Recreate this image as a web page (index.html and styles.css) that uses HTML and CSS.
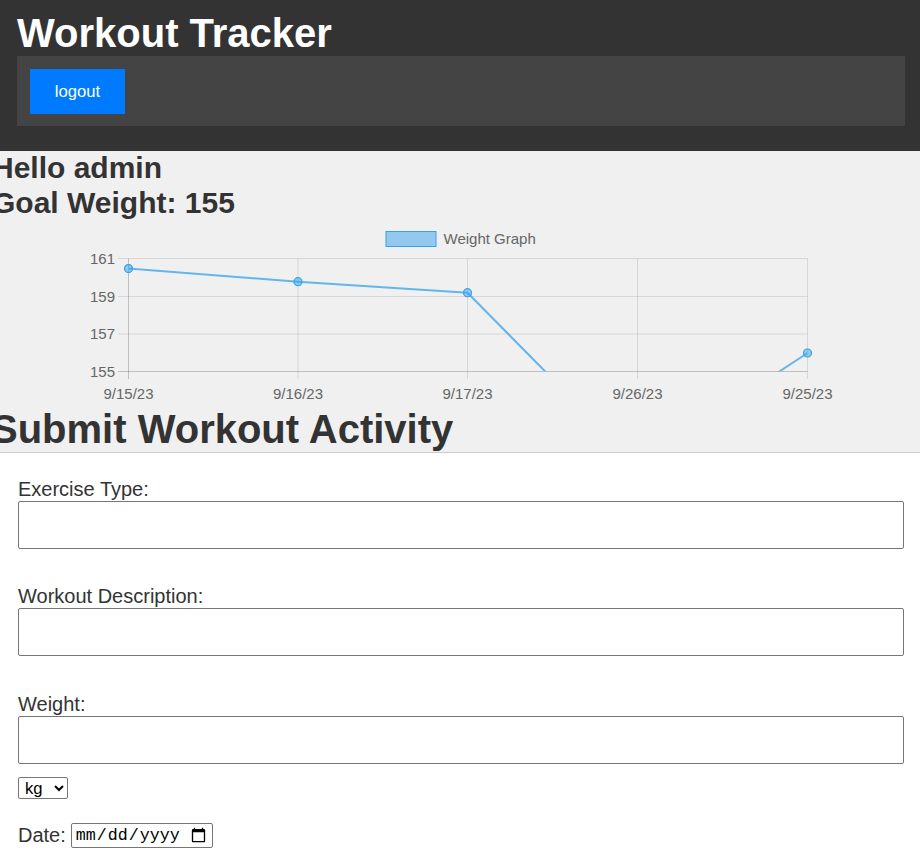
FILE: index.html
```html
<!DOCTYPE html>
<html lang="en">
<head>
<meta charset="utf-8">
<title>Workout Tracker</title>
<link rel="stylesheet" href="styles.css">
</head>
<body>
<header class="site-header">
  <h1 class="site-title">Workout Tracker</h1>
  <nav class="site-nav">
    <button class="logout-btn" type="button">logout</button>
  </nav>
</header>
<main class="main">
  <section class="summary">
    <h2 class="greeting">Hello admin</h2>
    <h2 class="goal">Goal Weight: 155</h2>
    <svg class="chart" width="920" height="186" viewBox="0 220 920 186" xmlns="http://www.w3.org/2000/svg">
      <defs>
        <clipPath id="area">
          <rect x="128.3" y="258.7" width="679" height="112.6"/>
        </clipPath>
      </defs>
      <rect x="386" y="231.5" width="50" height="15" fill="rgba(54,162,235,0.5)" stroke="rgb(54,162,235)" stroke-width="1"/>
      <text x="443.5" y="243.5" class="legend-text">Weight Graph</text>
      <g stroke="rgba(0,0,0,0.1)" stroke-width="1" fill="none">
        <line x1="118" y1="258.5" x2="807.5" y2="258.5"/>
        <line x1="118" y1="296.5" x2="807.5" y2="296.5"/>
        <line x1="118" y1="334" x2="807.5" y2="334"/>
        <line x1="298" y1="258.5" x2="298" y2="379"/>
        <line x1="467.5" y1="258.5" x2="467.5" y2="379"/>
        <line x1="637.5" y1="258.5" x2="637.5" y2="379"/>
        <line x1="807.5" y1="258.5" x2="807.5" y2="379"/>
      </g>
      <g stroke="rgba(0,0,0,0.2)" stroke-width="1" fill="none">
        <line x1="118" y1="371.5" x2="807.5" y2="371.5"/>
        <line x1="128.5" y1="258.5" x2="128.5" y2="379"/>
      </g>
      <g class="tick-text" text-anchor="end">
        <text x="115" y="263.5">161</text>
        <text x="115" y="301.5">159</text>
        <text x="115" y="339">157</text>
        <text x="115" y="376.5">155</text>
      </g>
      <g class="tick-text" text-anchor="middle">
        <text x="128.5" y="398.5">9/15/23</text>
        <text x="298" y="398.5">9/16/23</text>
        <text x="467.5" y="398.5">9/17/23</text>
        <text x="637.5" y="398.5">9/26/23</text>
        <text x="807.5" y="398.5">9/25/23</text>
      </g>
      <g clip-path="url(#area)">
        <polyline points="128.5,268.6 298,281.7 467.5,292.7 637.5,465 807.5,353" fill="none" stroke="rgba(54,162,235,0.75)" stroke-width="2" stroke-linejoin="round"/>
      </g>
      <g fill="rgba(54,162,235,0.5)" stroke="rgb(54,162,235)" stroke-width="1.2">
        <circle cx="128.5" cy="268.6" r="4"/>
        <circle cx="298" cy="281.7" r="4"/>
        <circle cx="467.5" cy="292.7" r="4"/>
        <circle cx="807.5" cy="353" r="4"/>
      </g>
    </svg>
    <h2 class="section-title">Submit Workout Activity</h2>
  </section>
  <form class="workout-form" onsubmit="return false;">
    <div class="field field-first">
      <label class="field-label" for="type">Exercise Type:</label>
      <input class="field-input" id="type" type="text">
    </div>
    <div class="field field-second">
      <label class="field-label" for="desc">Workout Description:</label>
      <input class="field-input" id="desc" type="text">
    </div>
    <div class="field field-weight">
      <label class="field-label" for="weight">Weight:</label>
      <input class="field-input" id="weight" type="text">
      <select class="unit-select">
        <option>kg</option>
        <option>lb</option>
      </select>
    </div>
    <div class="date-row">
      <label class="date-label" for="date">Date:</label>
      <input class="date-input" id="date" type="date">
    </div>
  </form>
</main>
</body>
</html>
```

FILE: styles.css
```css
html, body {
  margin: 0;
  padding: 0;
}
body {
  font-family: "Liberation Sans", Arial, sans-serif;
  background: #ffffff;
  color: #333333;
  overflow: hidden;
}
.site-header {
  background: #333333;
  padding: 10px 15px 25px 17px;
}
.site-title {
  margin: 0;
  font-size: 40px;
  font-weight: bold;
  line-height: 46px;
  color: #ffffff;
}
.site-nav {
  background: #444444;
  padding: 13px 13px 12px 13px;
  display: flex;
}
.logout-btn {
  width: 95px;
  height: 45px;
  background: #007bff;
  color: #ffffff;
  border: none;
  border-radius: 0;
  font-family: "Liberation Sans", Arial, sans-serif;
  font-size: 16.67px;
  padding: 0;
}
.main {
  display: block;
}
.summary {
  background: #f0f0f0;
  border-bottom: 1px solid #cccccc;
}
.greeting, .goal {
  margin: 0 0 0 -8px;
  font-size: 30px;
  line-height: 34.5px;
  font-weight: bold;
  color: #333333;
}
.chart {
  display: block;
}
.legend-text {
  font-family: "Liberation Sans", Arial, sans-serif;
  font-size: 15px;
  fill: #666666;
}
.tick-text {
  font-family: "Liberation Sans", Arial, sans-serif;
  font-size: 15px;
  fill: #666666;
}
.section-title {
  margin: 0 0 0 -9px;
  font-size: 40px;
  line-height: 46px;
  font-weight: bold;
  color: #333333;
}
.workout-form {
  background: #ffffff;
  padding: 24.5px 16px 20px 18px;
}
.field {
  display: flex;
  flex-direction: column;
  align-items: flex-start;
}
.field-first {
  margin-bottom: 36px;
}
.field-second {
  margin-bottom: 37.5px;
}
.field-label {
  font-size: 20px;
  line-height: 23px;
  color: #333333;
}
.field-input {
  width: 100%;
  height: 48px;
  box-sizing: border-box;
  border: 1px solid #767676;
  border-radius: 2px;
  background: #ffffff;
  font-size: 20px;
  padding: 0 10px;
  margin: 0;
}
.unit-select {
  margin-top: 13px;
  width: 50px;
  height: 22px;
  font-family: "Liberation Sans", Arial, sans-serif;
  font-size: 16.67px;
  color: #000000;
  border: 1px solid #767676;
  border-radius: 2px;
  background: #ffffff;
  padding: 0 0 0 2px;
}
.date-row {
  display: flex;
  align-items: center;
  gap: 5px;
  margin-top: 24px;
}
.date-label {
  font-size: 20px;
  line-height: 23px;
  color: #333333;
}
.date-input {
  width: 142px;
  height: 25px;
  box-sizing: border-box;
  border: 1px solid #767676;
  border-radius: 2px;
  font-family: "Liberation Mono", monospace;
  font-size: 16.67px;
  padding: 0 3px;
  background: #ffffff;
}
```
